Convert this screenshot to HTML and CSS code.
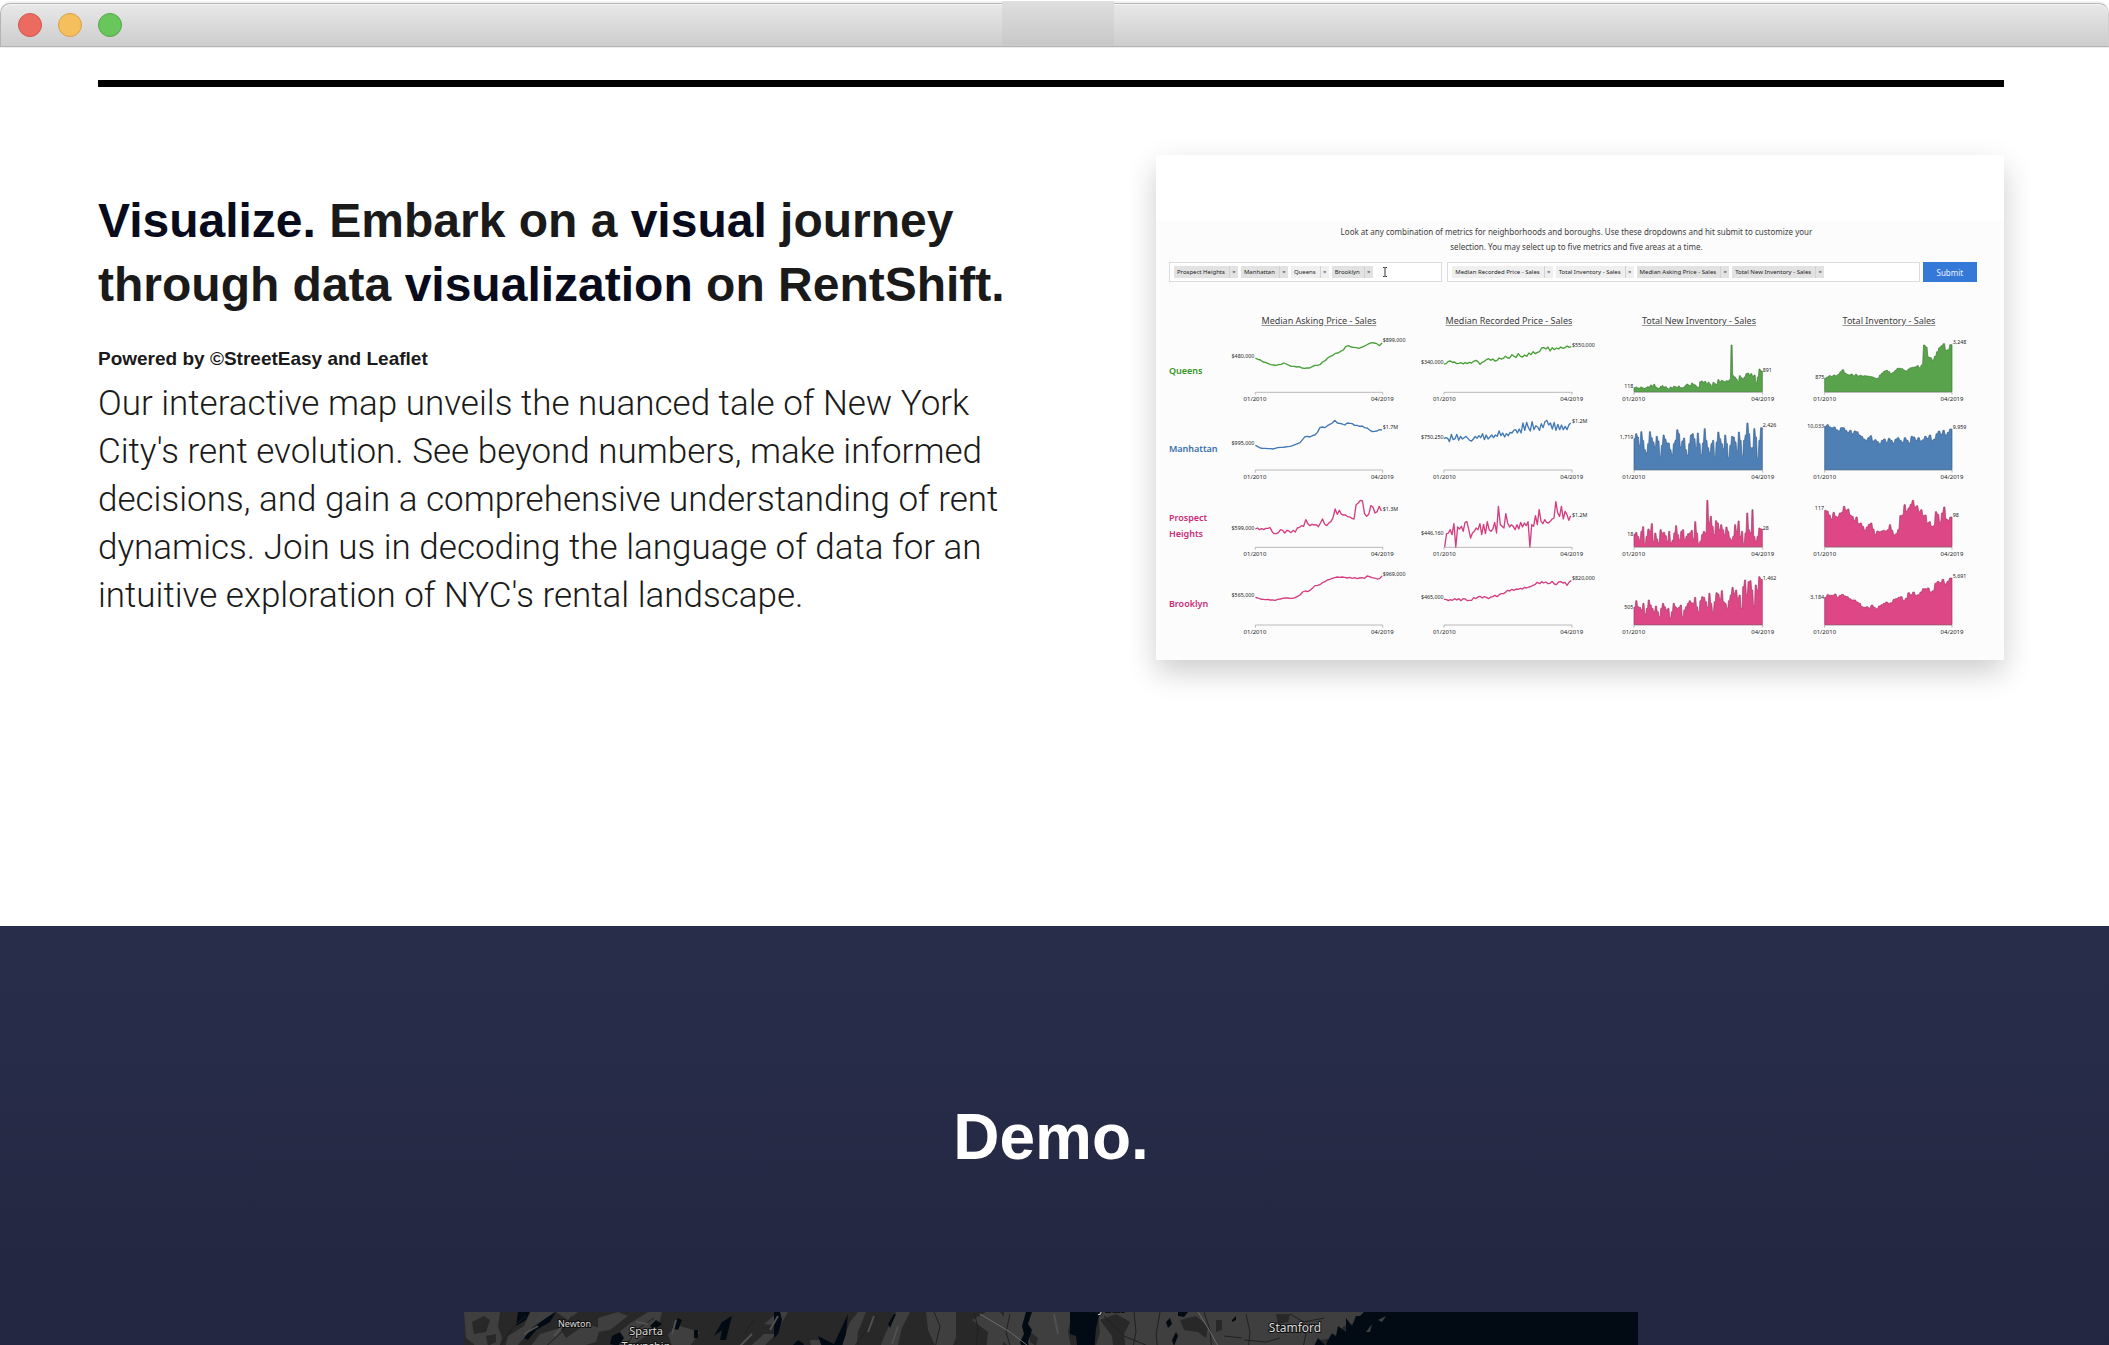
FILE: index.html
```html
<!DOCTYPE html>
<html lang="en">
<head>
<meta charset="utf-8">
<title>RentShift</title>
<link rel="stylesheet" href="styles.css">
</head>
<body>
<div class="window">
  <header class="titlebar">
    <button class="light light-close" type="button" aria-label="Close"></button>
    <button class="light light-min" type="button" aria-label="Minimize"></button>
    <button class="light light-max" type="button" aria-label="Zoom"></button>
    <span class="title-patch"></span>
  </header>

  <main>
    <section class="feature">
      <hr class="rule">
      <div class="feature-grid">
        <div class="copy">
          <h2><span class="hl">Visualize.</span> Embark on a <span class="hl">visual</span> journey<br>through data <span class="hl">visualization</span> on RentShift.</h2>
          <h5>Powered by ©StreetEasy and Leaflet</h5>
          <p>Our interactive map unveils the nuanced tale of New York<br>City's rent evolution. See beyond numbers, make informed<br>decisions, and gain a comprehensive understanding of rent<br>dynamics. Join us in decoding the language of data for an<br>intuitive exploration of NYC's rental landscape.</p>
        </div>

        <div class="card">
          <div class="dash">
            <p class="intro">Look at any combination of metrics for neighborhoods and boroughs. Use these dropdowns and hit submit to customize your<br>selection. You may select up to five metrics and five areas at a time.</p>
            <form class="filters">
              <div class="picker areas">
                <span class="tag">Prospect Heights<button type="button">×</button></span>
                <span class="tag">Manhattan<button type="button">×</button></span>
                <span class="tag pale">Queens<button type="button">×</button></span>
                <span class="tag">Brooklyn<button type="button">×</button></span>
                <svg class="caret" viewBox="0 0 6 10"><path d="M1 .5h1.5l.5.5.5-.5H5M3 1v8M1 9.500h1.500l.5-.5.5.5H5"/></svg>
              </div>
              <div class="picker metrics">
                <span class="tag pale">Median Recorded Price - Sales<button type="button">×</button></span>
                <span class="tag pale">Total Inventory - Sales<button type="button">×</button></span>
                <span class="tag">Median Asking Price - Sales<button type="button">×</button></span>
                <span class="tag">Total New Inventory - Sales<button type="button">×</button></span>
              </div>
              <button class="submit" type="button">Submit</button>
            </form>

            <div class="charts">
              <span></span>
              <h6>Median Asking Price - Sales</h6>
              <h6>Median Recorded Price - Sales</h6>
              <h6>Total New Inventory - Sales</h6>
              <h6>Total Inventory - Sales</h6>

              <strong class="green">Queens</strong>
              <svg class="chart green" viewBox="252 577 570 233">
                <path class="axis" d="M346 765v-7H728v7"/>
                <path class="line" data-from="346" data-to="726" data-y="655 659 661 667 668 672 675 676 677 675 674 670 673 677 680 680 682 681 685 686 685 685 681 677 677 675 667 663 655 650 647 641 640 635 631 621 618 622 623 624 626 623 620 616 612 609 610 612 618 610"/>
                <g class="val"><text class="end" x="343" y="654">$480,000</text><text x="728" y="608">$899,000</text></g>
                <g class="date"><text x="345" y="784">01/2010</text><text x="727" y="784">04/2019</text></g>
              </svg>
              <svg class="chart green" viewBox="822 577 570 233">
                <path class="axis" d="M912 765v-7H1296v7"/>
                <path class="line" data-from="912" data-to="1294" data-y="673 672 665 664 668 667 672 671 669 673 669 672 668 670 665 662 666 674 668 665 660 657 662 658 664 662 655 658 656 650 655 655 645 650 653 642 650 652 646 650 640 645 636 642 638 636 625 624 628 622 634 624 630 625 628 622 626 624 619 623 621"/>
                <g class="val"><text class="end" x="911" y="672">$340,000</text><text x="1296" y="621">$550,000</text></g>
                <g class="date"><text x="913" y="784">01/2010</text><text x="1295" y="784">04/2019</text></g>
              </svg>
              <svg class="chart green" viewBox="12 577 570 233">
                <path class="axis" d="M102 765v-7H488v7"/>
                <path class="area" data-from="102" data-to="487" data-base="756" data-y="744 742 744 746 742 744 746 744 741 742 736 740 734 742 745 746 740 738 742 741 746 748 742 745 740 741 743 739 744 744 743 738 733 736 738 730 734 736 742 743 726 724 728 725 732 728 733 740 728 732 734 720 726 722 724 726 723 724 720 616 708 712 718 726 708 714 718 712 702 700 706 702 710 706 730 712 688 694"/>
                <g class="val"><text class="end" x="100" y="746">118</text><text x="488" y="696">891</text></g>
                <g class="date"><text x="101" y="784">01/2010</text><text x="488" y="784">04/2019</text></g>
              </svg>
              <svg class="chart green" viewBox="582 577 570 233">
                <path class="axis" d="M674 765v-7H1056v7"/>
                <path class="area" data-from="674" data-to="1056" data-base="756" data-y="716 712 708 710 706 708 704 696 690 700 704 706 703 708 704 709 707 709 708 709 710 711 713 716 716 706 700 694 692 696 702 698 692 686 686 687 692 694 688 684 683 682 678 684 676 616 622 652 654 662 650 636 624 618 612 632 630 615"/>
                <g class="val"><text class="end" x="673" y="719">875</text><text x="1058" y="613">3,248</text></g>
                <g class="date"><text x="674" y="784">01/2010</text><text x="1056" y="784">04/2019</text></g>
              </svg>

              <strong class="blue">Manhattan</strong>
              <svg class="chart blue" viewBox="252 59 570 233">
                <path class="axis" d="M346 247v-8H728v8"/>
                <path class="line" data-from="346" data-to="726" data-y="165 169 173 174 174 175 175 176 174 172 171 171 170 169 168 166 163 160 157 148 139 138 140 136 134 126 112 110 112 106 102 98 90 98 99 101 104 98 99 100 105 105 108 107 112 113 119 124 123 122 118 119"/>
                <g class="val"><text class="end" x="343" y="164">$995,000</text><text x="728" y="117">$1.7M</text></g>
                <g class="date"><text x="345" y="266">01/2010</text><text x="727" y="266">04/2019</text></g>
              </svg>
              <svg class="chart blue" viewBox="822 59 570 233">
                <path class="axis" d="M912 247v-8H1296v8"/>
                <path class="line" data-from="912" data-to="1292" data-y="145 142 144 154 132 148 145 132 150 138 146 142 138 144 150 152 146 138 144 136 142 130 148 134 146 140 134 142 134 138 122 136 128 140 130 136 126 128 120 118 128 116 128 98 120 96 112 122 94 118 106 110 120 100 112 94 90 104 98 116 96 120 102 118 104 118 108 118 104 98"/>
                <g class="val"><text class="end" x="911" y="145">$750,250</text><text x="1296" y="99">$1.2M</text></g>
                <g class="date"><text x="913" y="266">01/2010</text><text x="1295" y="266">04/2019</text></g>
              </svg>
              <svg class="chart blue" viewBox="12 59 570 233">
                <path class="axis" d="M102 247v-8H488v8"/>
                <path class="area" data-from="102" data-to="487" data-base="238" data-y="145 130 140 165 124 150 178 188 160 124 142 155 170 138 152 198 165 134 146 158 158 178 194 160 150 118 130 170 152 143 178 195 160 134 130 145 172 128 160 194 158 115 150 172 188 160 150 200 155 125 145 160 175 134 160 202 165 138 140 155 182 125 150 196 150 134 98 130 172 172 115 140 204 150 112"/>
                <g class="val"><text class="end" x="100" y="147">1,719</text><text x="488" y="110">2,426</text></g>
                <g class="date"><text x="101" y="266">01/2010</text><text x="488" y="266">04/2019</text></g>
              </svg>
              <svg class="chart blue" viewBox="582 59 570 233">
                <path class="axis" d="M674 247v-8H1056v8"/>
                <path class="area" data-from="674" data-to="1056" data-base="238" data-y="108 103 110 112 110 118 122 112 112 120 126 120 130 122 124 134 138 146 150 142 136 152 148 154 160 150 146 156 144 150 158 146 142 150 156 142 150 158 138 140 150 142 152 148 138 144 134 150 146 130 122 132 120 134 126 116"/>
                <g class="val"><text class="end" x="672" y="114">10,033</text><text x="1058" y="115">9,959</text></g>
                <g class="date"><text x="674" y="266">01/2010</text><text x="1056" y="266">04/2019</text></g>
              </svg>

              <strong class="pink">Prospect<br>Heights</strong>
              <svg class="chart pink" viewBox="252 292 570 233">
                <path class="axis" d="M346 480v-7H728v7"/>
                <path class="line" data-from="346" data-to="724" data-y="418 415 420 417 420 416 416 414 426 432 432 429 420 422 430 422 424 429 422 427 415 413 408 410 390 402 408 404 406 405 411 400 388 403 408 400 396 384 358 374 362 374 376 376 381 382 386 388 345 340 332 334 372 380 374 348 352 370 366 350 364"/>
                <g class="val"><text class="end" x="343" y="421">$599,000</text><text x="728" y="364">$1.3M</text></g>
                <g class="date"><text x="345" y="500">01/2010</text><text x="727" y="500">04/2019</text></g>
              </svg>
              <svg class="chart pink" viewBox="822 292 570 233">
                <path class="axis" d="M912 480v-7H1296v7"/>
                <path class="line" data-from="914" data-to="1292" data-y="472 432 430 420 435 402 472 412 418 410 425 398 396 420 445 430 425 415 420 402 435 404 432 396 420 425 418 398 430 350 405 410 415 372 400 412 405 410 420 405 418 398 412 400 408 396 472 405 410 378 405 360 395 402 390 398 400 395 388 385 336 370 380 350 388 365 375 392 378"/>
                <g class="val"><text class="end" x="911" y="436">$446,160</text><text x="1296" y="381">$1.2M</text></g>
                <g class="date"><text x="913" y="500">01/2010</text><text x="1295" y="500">04/2019</text></g>
              </svg>
              <svg class="chart pink" viewBox="12 292 570 233">
                <path class="axis" d="M102 480v-7H488v7"/>
                <path class="area" data-from="102" data-to="487" data-base="471" data-y="434 428 440 450 425 411 462 440 418 425 402 455 430 448 460 420 430 428 438 455 425 460 452 430 408 435 450 425 420 450 440 432 430 422 448 396 430 462 455 435 425 430 332 400 380 410 435 393 400 420 405 420 435 412 425 445 452 440 405 425 394 440 425 462 430 370 420 430 360 440 455 440 415 418"/>
                <g class="val"><text class="end" x="100" y="438">18</text><text x="488" y="420">28</text></g>
                <g class="date"><text x="101" y="500">01/2010</text><text x="488" y="500">04/2019</text></g>
              </svg>
              <svg class="chart pink" viewBox="582 292 570 233">
                <path class="axis" d="M674 480v-7H1056v7"/>
                <path class="area" data-from="674" data-to="1056" data-base="471" data-y="362 364 376 388 368 380 382 370 368 350 362 358 376 380 392 382 402 400 410 422 412 404 400 418 434 424 426 424 422 424 420 405 422 436 432 420 378 376 345 365 355 344 332 352 348 366 360 378 376 400 396 410 408 366 374 398 370 352 388 392 382"/>
                <g class="val"><text class="end" x="672" y="362">117</text><text x="1058" y="381">98</text></g>
                <g class="date"><text x="674" y="500">01/2010</text><text x="1056" y="500">04/2019</text></g>
              </svg>

              <strong class="pink">Brooklyn</strong>
              <svg class="chart pink" viewBox="252 525 570 233">
                <path class="axis" d="M346 713v-8H728v8"/>
                <path class="line" data-from="346" data-to="726" data-y="622 624 627 628 629 628 630 630 631 628 627 625 624 624 625 625 623 619 615 606 603 605 601 595 587 586 584 578 575 570 568 565 563 561 562 561 562 564 562 565 563 566 564 563 565 558 560 563 564 567 566 558"/>
                <g class="val"><text class="end" x="343" y="621">$565,000</text><text x="728" y="558">$969,000</text></g>
                <g class="date"><text x="345" y="733">01/2010</text><text x="727" y="733">04/2019</text></g>
              </svg>
              <svg class="chart pink" viewBox="822 525 570 233">
                <path class="axis" d="M912 713v-8H1296v8"/>
                <path class="line" data-from="912" data-to="1294" data-y="628 628 632 629 631 626 630 626 632 626 627 632 631 631 623 626 621 619 624 620 622 626 621 620 616 620 614 611 611 607 601 603 598 601 597 598 595 597 592 594 591 589 586 583 577 581 575 579 576 581 580 574 582 584 576 575 579 577 586 576 572"/>
                <g class="val"><text class="end" x="911" y="627">$465,000</text><text x="1296" y="570">$820,000</text></g>
                <g class="date"><text x="913" y="733">01/2010</text><text x="1295" y="733">04/2019</text></g>
              </svg>
              <svg class="chart pink" viewBox="12 525 570 233">
                <path class="axis" d="M102 713v-8H488v8"/>
                <path class="area" data-from="102" data-to="487" data-base="704" data-y="652 632 650 652 660 640 672 655 630 645 655 665 648 665 680 655 640 650 660 655 684 665 640 650 655 652 645 680 660 650 640 632 638 640 622 650 665 632 620 622 635 652 610 640 665 635 608 612 628 602 635 640 655 632 615 592 610 600 625 615 655 590 570 615 575 572 600 648 585 600 560 568"/>
                <g class="val"><text class="end" x="100" y="657">505</text><text x="488" y="570">1,462</text></g>
                <g class="date"><text x="101" y="733">01/2010</text><text x="488" y="733">04/2019</text></g>
              </svg>
              <svg class="chart pink" viewBox="582 525 570 233">
                <path class="axis" d="M674 713v-8H1056v8"/>
                <path class="area" data-from="674" data-to="1056" data-base="704" data-y="622 614 616 616 612 622 616 613 618 620 626 630 630 636 640 650 652 650 654 645 652 656 648 644 640 636 640 638 628 626 622 620 632 625 608 614 606 616 614 606 596 596 594 606 602 580 574 578 568 582 574 564"/>
                <g class="val"><text class="end" x="672" y="626">3,184</text><text x="1058" y="565">5,691</text></g>
                <g class="date"><text x="674" y="733">01/2010</text><text x="1056" y="733">04/2019</text></g>
              </svg>
            </div>
          </div>
        </div>
      </div>
    </section>

    <section class="demo">
      <h2>Demo.</h2>
      <svg class="map" viewBox="0 0 1174 120" role="img" aria-label="Map of the New York area">
        <rect width="1174" height="120" fill="#282828"/>
        <g fill="#3f3f3f">
          <path d="M0 0h36l-2 14 4 12-4 14H12l-2-8L2 26zM44 24l16-10 6-14h24l-14 12-18 16-10 12H40zM62 40l14-18 20-6 6 10 20-14 14 4-4 14-14 4-10 10zM92 0h22l-10 8zM134 6l20-6 10 4-18 14-12 2zM150 24l18-14 16-10h14l-4 16-24 16-12 8h-8zM204 22l12-8 20 6-10 14h-18zM280 40l20-18 12 0-10 10-4 8zM300 12l14-12h10l-8 14zM346 28l12 0 2 12h-12zM378 30l8-20 8-10h8l-8 20-2 20h-12zM414 40l8-20 10-20h14l-8 16-6 24zM462 0h30v26l-6 14h-12l-10-22zM508 8l14-8h14l10 12-10 28h-14l2-20zM540 0h36v40h-26l-10-10z"/>
          <path d="M576 0h32l-4 20 4 20h-32zM634 0h266l-6 10-14 4-10 12-14 2-10 12H630l6-20z"/>
        </g>
        <g fill="#282828">
          <path d="M8 10l12-6 6 4-4 12-12 2zM22 24l10-2 0 8-8 4zM636 8l16-6 14 8-6 12 2 18h-12l-2-16zM716 8l16-4 12 10-2 12-8-6-14-2zM752 8l6 0 0 10-6 2zM812 2l14 0-2 8-10 2zM566 20l8 6-2 8-6-4z"/>
        </g>
        <g fill="#020b14">
          <path d="M54 0h12l-4 8-10 6zM68 16l14-10 10-6-6 10-14 8-8 10-4-2zM148 24l8-4 4 6-6 8-8-2zM186 14l6-6 6 4-8 6zM208 16l6-10 4 2-4 10zM230 18l4 0 0 8-4 0zM310 0h6l2 8-4 14-4 4zM250 24l8-14 10-6-6 24-6 0 2-10zM326 36l8-8 6 4-4 8zM354 24l16 8 14-30-2 20-6 18h-16zM424 12l6-10 2 0-6 14zM562 0h6l-4 12 4 6-4 12 2 10h-6l-4-10 4-8-2-8z"/>
          <path d="M606 0h30l-4 16-2 24h-16l-2-16-6-2zM714 0h10l-4 5-6-1zM702 10l4-4 2 6-4 4zM708 28l4-8 2 4-4 10zM768 8l4-4 0 4-4 2zM900 0h274v120H840l2-12 8-74 4-8 8 8 4-14 6 4 2-10 8 6 0-14 6 8 4-10 4 0z"/>
        </g>
        <g fill="#3f3f3f"><path d="M902 20l6-8-2 8zM914 8l8-4-4 6zM864 20l6-2-6 10z"/></g>
        <g class="streets">
          <path d="M36 34l14-20 12-10M108 4l-10 16-18 16M190 6l-18 12-12 20M290 8l-10 14M412 4l-14 20-10 14M470 0l6 14-6 26M510 0l4 16-2 24M546 2l-4 18 6 20M640 4l20 20 24 10 26 6M670 0l2 20-4 20M696 0l-4 22 2 18M740 0l6 18 2 22M782 2l4 18-2 20M780 28l22 2 14-4M826 2l14 8 20-4M830 14l12 8-4 18M760 24l18 2"/>
        </g>
        <path class="highway" d="M516 2l30 18 26 20M734 0l10 16 10 18"/>
        <path class="ridge" d="M60 22l14-8M90 24l10-12M172 10l12 2M212 8l-4 14M276 34l12-12M306 18l8-14M404 20l6-16M434 14l-6 18M590 2l4 20"/>
        <g class="place">
          <text x="94" y="15" font-size="9">Newton</text>
          <text x="182" y="23" font-size="11" text-anchor="middle">Sparta</text>
          <text x="182" y="38" font-size="11" text-anchor="middle">Township</text>
          <text x="642" y="0" font-size="12" text-anchor="middle">Nyack</text>
          <text x="831" y="20" font-size="12" text-anchor="middle">Stamford</text>
        </g>
      </svg>
    </section>
  </main>
</div>
<script src="charts.js"></script>
</body>
</html>
```
FILE: charts.js
```js
// Draws every sparkline from its evenly spaced readings.
document.querySelectorAll('[data-y]').forEach(function (path) {
  var d = path.dataset;
  var ys = d.y.split(' ').map(Number);
  var from = Number(d.from);
  var to = Number(d.to);
  var step = (to - from) / (ys.length - 1);
  var points = ys.map(function (y, i) {
    return (from + i * step).toFixed(1) + ' ' + y;
  });
  if (d.base) {
    var out = 'M' + from + ' ' + d.base;
    ys.forEach(function (y, i) {
      var x = from + i * (to - from) / ys.length;
      out += 'L' + x.toFixed(1) + ' ' + y + 'h' + (step * 0.6).toFixed(1);
    });
    path.setAttribute('d', out + 'L' + to + ' ' + ys[ys.length - 1] + 'V' + d.base + 'z');
  } else {
    path.setAttribute('d', 'M' + points.join('L'));
  }
});
```
FILE: styles.css
```css
* { box-sizing: border-box; }

body {
  margin: 0;
  background: #fff;
  color: #1a1a1a;
  font-family: "Liberation Sans", Arial, sans-serif;
}

h2, h5, h6, p { margin: 0; }
button { font: inherit; border: 0; padding: 0; }

.window {
  display: flex;
  flex-direction: column;
  height: 100vh;
  overflow: hidden;
}

/* window chrome */
.titlebar {
  position: relative;
  flex: none;
  display: flex;
  align-items: center;
  gap: 16px;
  height: 44px;
  margin-top: 3px;
  padding-left: 17px;
  border: 1px solid #b4b4b4;
  border-right-color: #d0d0d0;
  border-radius: 10px 10px 0 0;
  background: linear-gradient(#e8e8e8, #cdcdcd);
  box-shadow: inset 0 1px 0 #f6f6f6, 0 1px 0 #ececec, 0 -2px 0 #f2f2f2;
}
.light {
  width: 24px;
  height: 24px;
  border: 1px solid;
  border-radius: 50%;
}
.light-close { background: #ec6b60; border-color: #d2544b; }
.light-min { background: #f5bf5e; border-color: #d9a044; }
.light-max { background: #68c65c; border-color: #54a648; }
.title-patch {
  position: absolute;
  left: 50%;
  top: -3px;
  width: 112px;
  height: 44px;
  margin-left: -53px;
  background: linear-gradient(#dedede, #c8c8c8);
}

main {
  flex: 1;
  display: flex;
  flex-direction: column;
  min-height: 0;
}

/* feature */
.feature {
  flex: none;
  padding: 33px 105px 266px 98px;
}
.rule {
  height: 7px;
  margin: 0 0 68px;
  border: 0;
  background: #000;
}
.feature-grid {
  display: grid;
  grid-template-columns: 27fr 25fr;
  gap: 142px;
}
.copy {
  padding-top: 34px;
  white-space: nowrap;
}
.copy h2 {
  font-size: 48px;
  line-height: 64px;
}
.hl { color: #070b1c; }
.copy h5 {
  margin-top: 30px;
  font-size: 19px;
  line-height: 24px;
}
.copy p {
  margin-top: 9px;
  font-family: Roboto, sans-serif;
  font-weight: 300;
  font-size: 35px;
  line-height: 48px;
}

/* dashboard preview */
.card {
  padding-top: 66px;
  background: #fff;
  box-shadow: 0 12px 28px rgba(0, 0, 0, .2);
}
.dash {
  padding: 3px 20px 17px 13px;
  background: #fcfcfc;
  font-family: "Noto Sans", sans-serif;
  color: #3c3c3c;
}
.intro {
  font-size: 8px;
  line-height: 15px;
  text-align: center;
  white-space: nowrap;
}
.filters {
  display: flex;
  height: 20px;
  margin: 8px 7px 31px 0;
}
.picker {
  display: flex;
  align-items: center;
  gap: 3px;
  padding-left: 4px;
  border: 1px solid #dcdcdc;
  background: #fff;
  font-size: 6px;
  line-height: 12px;
  white-space: nowrap;
}
.areas { flex: 271; margin-right: 5px; }
.metrics { flex: 473; margin-right: 3px; }
.tag {
  display: flex;
  padding-left: 3px;
  background: #e2e2e2;
  color: #222;
}
.tag.pale { background: #efefef; }
.tag button {
  width: 9px;
  margin-left: 4px;
  border-left: 1px solid #d2d2d2;
  background: none;
  color: #333;
  line-height: 12px;
}
.caret {
  width: 6px;
  height: 10px;
  margin-left: 6px;
  fill: none;
  stroke: #333;
  stroke-width: 1;
}
.submit {
  flex: 55;
  background: #3579d8;
  color: #e8f0fc;
  font-size: 8px;
}

.charts {
  display: grid;
  grid-template-columns: 55fr repeat(4, 190fr);
  align-items: center;
}
.charts h6 {
  padding-bottom: 4px;
  font-size: 9px;
  font-weight: 400;
  line-height: 15px;
  text-align: center;
  text-decoration: underline;
  text-decoration-color: #999;
}
.charts strong {
  font-size: 9px;
  font-weight: 600;
  line-height: 16px;
}
.chart {
  display: block;
  width: 100%;
  height: auto;
}
strong.green { color: #339324; }
strong.blue { color: #3470ac; }
strong.pink { color: #cc2b78; }
.axis { fill: none; stroke: #999; stroke-width: 2; }
.line { fill: none; stroke-width: 4; stroke-linejoin: round; }
.green .line { stroke: #45a035; }
.blue .line { stroke: #4078b4; }
.pink .line { stroke: #d43d80; }
.area { stroke-width: 2; }
.green .area { fill: #58a34b; stroke: #3d7a33; }
.blue .area { fill: #4e7fb5; stroke: #375f8c; }
.pink .area { fill: #dd4785; stroke: #a33564; }
.val, .date { fill: #222; }
.val { font-size: 16px; }
.date { font-size: 18px; text-anchor: middle; }
.end { text-anchor: end; }

/* demo */
.demo {
  flex: 1;
  min-height: 0;
  padding: 171px 105px 0 98px;
  background: linear-gradient(#282e4a, #232641);
  overflow: hidden;
}
.demo h2 {
  color: #fff;
  font-size: 64px;
  line-height: 80px;
  text-align: center;
}
.map {
  display: block;
  width: 100%;
  max-width: 1174px;
  margin: 135px auto 0;
}
.streets, .highway, .ridge { fill: none; }
.streets { stroke: #202020; stroke-width: 1; }
.highway { stroke: #6c6c6c; stroke-width: 1; }
.ridge { stroke: #505050; stroke-width: 2; }
.place {
  fill: #d8d8d8;
  stroke: #111;
  stroke-width: 2;
  paint-order: stroke;
  font-family: "Noto Sans", sans-serif;
}
```
